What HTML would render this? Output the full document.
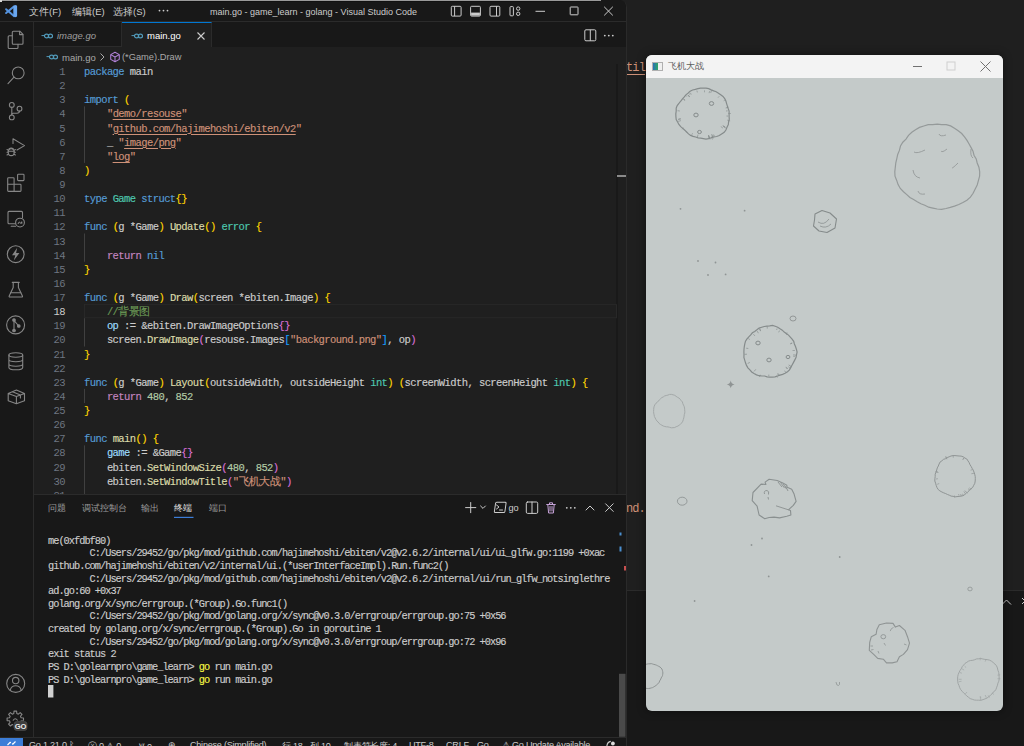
<!DOCTYPE html>
<html><head><meta charset="utf-8">
<style>
*{margin:0;padding:0;box-sizing:border-box}
html,body{width:1024px;height:746px;overflow:hidden;background:#1f1f1f;font-family:"Liberation Sans",sans-serif;position:relative}
.a{position:absolute}
#vs{left:0;top:0;width:627px;height:746px;background:#181818;border-radius:5px 7px 0 0;overflow:hidden;border-right:1px solid #2a2a2a}
#title{left:0;top:0;width:627px;height:22px;border-bottom:1px solid #2b2b2b;background:#181818}
.menu{top:6px;font-size:9.5px;color:#cccccc;white-space:nowrap}
#act{left:0;top:22px;width:34px;height:715px;background:#181818;border-right:1px solid #2b2b2b}
#tabs{left:34px;top:22px;width:593px;height:25px;background:#181818}
.tab{top:0;height:25px;white-space:nowrap}
#crumb{left:34px;top:47px;width:593px;height:17px;background:#1f1f1f}
#editor{left:34px;top:64px;width:593px;height:430px;background:#1f1f1f;overflow:hidden}
.ln{position:absolute;left:0;width:31px;margin-top:1px;height:14px;line-height:14px;text-align:right;font-family:"Liberation Mono",monospace;font-size:10.5px;color:#6e7681;letter-spacing:-0.58px}
.cl{position:absolute;left:50px;margin-top:1px;-webkit-text-stroke:0.15px currentColor;font-family:"Liberation Mono",monospace;font-size:10.5px;letter-spacing:-0.58px;color:#cccccc;white-space:pre;height:14px;line-height:14px}
.k{color:#569cd6}.s{color:#ce9178}.t{color:#4ec9b0}.f{color:#dcdcaa}.v{color:#9cdcfe}.n{color:#b5cea8}.c{color:#6a9955}.p{color:#c586c0}
.b1{color:#ffd700}.b2{color:#da70d6}.b3{color:#179fff}
.u{text-decoration:underline;text-underline-offset:2px}
#panel{left:34px;top:494px;width:593px;height:243px;background:#181818;border-top:1px solid #2b2b2b}
.pt{top:8px;font-size:8.5px;color:#9d9d9d;white-space:nowrap}
.tl{position:absolute;left:48px;margin-top:1.5px;-webkit-text-stroke:0.15px currentColor;font-family:"Liberation Mono",monospace;font-size:10.3px;letter-spacing:-0.98px;color:#cccccc;white-space:pre;height:12.58px;line-height:12.58px}
#status{left:0;top:737px;width:627px;height:9px;background:#181818;border-top:1px solid #2b2b2b;overflow:hidden}
.st{top:1.5px;font-size:9.1px;letter-spacing:-0.25px;color:#cccccc;white-space:nowrap}
#game{left:646px;top:55px;width:357px;height:656px;background:#c4cac9;border-radius:6px;overflow:hidden;box-shadow:0 0 10px rgba(0,0,0,.45)}
#gtitle{left:0;top:0;width:357px;height:23px;background:#f3f3f3}
</style></head><body>
<!-- background window -->
<div class="a" style="left:500px;top:60.8px;font-family:'Liberation Mono',monospace;font-size:12px;letter-spacing:-0.9px;color:#ce9178;white-space:pre;text-decoration:underline;text-underline-offset:3px">hi/ebiten/v2/ebitenutil</div>
<div class="a" style="left:607px;top:501.9px;font-family:'Liberation Mono',monospace;font-size:12px;letter-spacing:-0.9px;color:#ce9178;white-space:pre">round.</div>
<div class="a" style="left:627px;top:590px;width:397px;height:156px;background:#181818;border-top:1px solid #2b2b2b"></div>
<svg class="a" style="left:995px;top:592px" width="29" height="20"><path d="M7 12.5 L11.5 8 L16 12.5" fill="none" stroke="#cccccc" stroke-width="1"/><path d="M27 6 L33 12 M33 6 L27 12" stroke="#cccccc" stroke-width="1"/></svg>

<div class="a" id="vs">
  <div class="a" id="title">
    <svg class="a" style="left:0;top:0" width="22" height="21" viewBox="0 0 22 21"><g stroke="#5593df" stroke-width="2" stroke-linecap="round"><path d="M14.2 6.2 L6.1 13"/><path d="M14.2 16.2 L6.1 9.2"/></g><path d="M13.3 6.3 L15.6 5 Q17.1 5.2 17.1 6.3 V15.8 Q17.1 17 15.6 17.2 L13.3 16.1 Z" fill="#6aa7f0"/></svg>
    <div class="a menu" style="left:29px">文件(F)</div>
    <div class="a menu" style="left:72px">编辑(E)</div>
    <div class="a menu" style="left:113px">选择(S)</div>
    <div class="a menu" style="left:210px;font-size:9px;top:7px">main.go - game_learn - golang - Visual Studio Code</div>
  </div>
  <div class="a" id="act"></div>
  <svg class="a" style="left:0;top:21px" width="33" height="716" viewBox="0 21 33 716">
<g fill="none" stroke="#868686" stroke-width="1.1" stroke-linejoin="round" stroke-linecap="round">
<!-- explorer -->
<path d="M12.3 35.8 H9.2 Q8.2 35.8 8.2 36.8 V47.5 Q8.2 48.5 9.2 48.5 H17 Q18 48.5 18 47.5 V44.3"/>
<path d="M13.3 31.2 H19.8 L23 34.4 V43.2 Q23 44.2 22 44.2 H13.3 Q12.3 44.2 12.3 43.2 V32.2 Q12.3 31.2 13.3 31.2 Z"/>
<path d="M19.6 31.4 V34.6 H22.8"/>
<!-- search -->
<circle cx="18.2" cy="72.9" r="5.9"/>
<path d="M14 77.2 L8 83.6"/>
<!-- scm -->
<circle cx="11.8" cy="104.9" r="2.4"/>
<circle cx="11.8" cy="117.4" r="2.4"/>
<circle cx="19.5" cy="108.7" r="2.4"/>
<path d="M11.8 107.3 V115"/>
<path d="M19.5 111.1 Q19.5 113.2 17 113.2 H13 Q11.8 113.2 11.8 114.2"/>
<!-- debug -->
<path d="M13 143.5 V138.7 L24.5 145.6 L17 150"/>
<ellipse cx="11.2" cy="152.2" rx="3" ry="3.4"/>
<path d="M7 149.5 L8.3 150.3 M7 152.3 H8.2 M7 155 L8.3 154.2 M15.4 149.5 L14.1 150.3 M15.4 152.3 H14.2 M15.4 155 L14.1 154.2 M9 149 Q11.2 147.3 13.4 149 M8.3 151.3 H14.1"/>
<!-- extensions -->
<rect x="7.7" y="177.7" width="6.4" height="6.5" rx="0.8"/>
<path d="M7.7 184.2 V190.6 Q7.7 191.4 8.5 191.4 H20.2 Q21 191.4 21 190.6 V184.9 Q21 184.2 20.2 184.2 H14.1 V191.4"/>
<rect x="17.6" y="174.2" width="6.4" height="6.4" rx="0.8"/>
<!-- remote explorer -->
<path d="M15.5 223.8 H9 Q8 223.8 8 222.8 V212.4 Q8 211.4 9 211.4 H21.5 Q22.5 211.4 22.5 212.4 V217.6"/>
<path d="M11.2 226.2 H15.6"/>
<circle cx="20" cy="222.6" r="4.4"/>
<path d="M18.2 223.4 L19.4 222.2 M20.6 223.2 L21.8 222 M21.8 222 V223.2"/>
<!-- lightning -->
<circle cx="15.7" cy="254.2" r="8.4"/>
<!-- flask -->
<path d="M12.3 282.4 H19.2 M13.2 282.4 V287.5 L9.2 296 Q8.8 297 9.8 297 H21.8 Q22.8 297 22.4 296 L18.4 287.5 V282.4"/>
<path d="M10.8 292.8 H20.8"/>
<!-- git graph -->
<circle cx="15.6" cy="324.9" r="9"/>
<path d="M14 319.5 V330.5 M14.3 320.8 L18.8 326"/>
<circle cx="14" cy="320" r="1.3" fill="#868686"/><circle cx="18.8" cy="326" r="1.3" fill="#868686"/><circle cx="14" cy="330.5" r="1.3" fill="#868686"/>
<!-- database -->
<ellipse cx="15.8" cy="355" rx="6.9" ry="2.2"/>
<path d="M8.9 355 V367.5 Q8.9 369.8 15.8 369.8 Q22.7 369.8 22.7 367.5 V355 M8.9 359.6 Q8.9 361.8 15.8 361.8 Q22.7 361.8 22.7 359.6 M8.9 364 Q8.9 366.2 15.8 366.2 Q22.7 366.2 22.7 364"/>
<!-- package -->
<path d="M8.2 393.5 L16.4 396.5 L24.5 393.5 M16.4 396.5 V403.7 M8.2 393.5 V400.7 L16.4 403.7 L24.5 400.7 V393.5 L16.4 390 L8.2 393.5 M12.5 391.8 L20.4 395 V398"/>
<!-- account -->
<circle cx="15.7" cy="683.4" r="9"/>
<circle cx="15.7" cy="680.6" r="3.2"/>
<path d="M10.2 690.2 Q11.2 685.7 15.7 685.7 Q20.2 685.7 21.2 690.2"/>
<!-- gear -->
<path d="M14.00 711.10 L16.60 711.10 L16.79 713.49 L18.35 714.14 L20.18 712.59 L22.01 714.42 L20.46 716.25 L21.11 717.81 L23.50 718.00 L23.50 720.60 L21.11 720.79 L20.46 722.35 L22.01 724.18 L20.18 726.01 L18.35 724.46 L16.79 725.11 L16.60 727.50 L14.00 727.50 L13.81 725.11 L12.25 724.46 L10.42 726.01 L8.59 724.18 L10.14 722.35 L9.49 720.79 L7.10 720.60 L7.10 718.00 L9.49 717.81 L10.14 716.25 L8.59 714.42 L10.42 712.59 L12.25 714.14 L13.81 713.49 Z"/>
<path d="M13.2 720.2 Q15.3 717.2 17.4 720.2"/>
</g>
<path d="M17.2 247.8 L12 255.3 H15.3 L13.8 260.6 L19.4 253 H16.1 Z" fill="#868686"/>
<rect x="13.2" y="720.8" width="14.6" height="10.2" rx="3" fill="#181818"/><rect x="14.2" y="721.6" width="12.8" height="8.8" rx="2.5" fill="#3d3d3d" stroke="#555" stroke-width="0.6"/>
<text x="20.6" y="729" text-anchor="middle" font-family="Liberation Sans" font-size="7.6" font-weight="bold" fill="#e8e8e8">GO</text>
</svg>
  <div class="a" id="tabs">
    <div class="a tab" style="left:0;width:88px;border-right:1px solid #2b2b2b;border-bottom:1px solid #2b2b2b;background:#181818">
      <svg class="a" style="left:7.0px;top:10.0px" width="16" height="8" viewBox="0 0 16 8"><path d="M0.5 3.6 H3.2" stroke="#519aba" stroke-width="1"/><ellipse cx="5.6" cy="4" rx="2.1" ry="1.9" fill="none" stroke="#519aba" stroke-width="1.2"/><ellipse cx="9.4" cy="4" rx="2.1" ry="1.9" fill="none" stroke="#519aba" stroke-width="1.2"/></svg>
      <span class="a" style="left:23px;top:8px;color:#9d9d9d;font-style:italic;font-size:9.5px">image.go</span>
    </div>
    <div class="a tab" style="left:88px;width:90px;height:25px;background:#1f1f1f;border-top:1px solid #0078d4;border-right:1px solid #2b2b2b">
      <svg class="a" style="left:9.0px;top:9.0px" width="16" height="8" viewBox="0 0 16 8"><path d="M0.5 3.6 H3.2" stroke="#519aba" stroke-width="1"/><ellipse cx="5.6" cy="4" rx="2.1" ry="1.9" fill="none" stroke="#519aba" stroke-width="1.2"/><ellipse cx="9.4" cy="4" rx="2.1" ry="1.9" fill="none" stroke="#519aba" stroke-width="1.2"/></svg>
      <span class="a" style="left:25px;top:7px;color:#ffffff;font-size:9.5px">main.go</span>
      <svg class="a" style="left:74px;top:8px" width="10" height="10"><path d="M1.5 1.5 L8.5 8.5 M8.5 1.5 L1.5 8.5" stroke="#cccccc" stroke-width="1.1"/></svg>
    </div>
  </div>
  <div class="a" id="crumb">
    <svg class="a" style="left:12.0px;top:6.0px" width="16" height="8" viewBox="0 0 16 8"><path d="M0.5 3.6 H3.2" stroke="#519aba" stroke-width="1"/><ellipse cx="5.6" cy="4" rx="2.1" ry="1.9" fill="none" stroke="#519aba" stroke-width="1.2"/><ellipse cx="9.4" cy="4" rx="2.1" ry="1.9" fill="none" stroke="#519aba" stroke-width="1.2"/></svg>
    <span class="a" style="left:28px;top:4.5px;color:#a9a9a9;font-size:9.5px">main.go</span>
    <svg class="a" style="left:64px;top:5px" width="8" height="10"><path d="M2.5 1.5 L6 5 L2.5 8.5" fill="none" stroke="#a9a9a9" stroke-width="1"/></svg>
    <svg class="a" style="left:74.5px;top:3.5px" width="12" height="12" viewBox="0 0 14 14"><path d="M7 1.5 L12 4.2 V9.8 L7 12.5 L2 9.8 V4.2 Z M2 4.2 L7 7 L12 4.2 M7 7 V12.5" fill="none" stroke="#b180d7" stroke-width="1.2" stroke-linejoin="round"/></svg>
    <span class="a" style="left:88px;top:4.5px;color:#a9a9a9;font-size:9.3px">(*Game).Draw</span>
  </div>
  <div class="a" id="editor">
<div class="ln" style="top:0.00px">1</div>
<div class="cl" style="top:0.00px"><span class="k">package</span> main</div>
<div class="ln" style="top:14.12px">2</div>
<div class="ln" style="top:28.25px">3</div>
<div class="cl" style="top:28.25px"><span class="k">import</span> <span class="b1">(</span></div>
<div class="ln" style="top:42.38px">4</div>
<div class="cl" style="top:42.38px">    <span class="s">"<span class="u">demo/resouse</span>"</span></div>
<div class="ln" style="top:56.50px">5</div>
<div class="cl" style="top:56.50px">    <span class="s">"<span class="u">github.com/hajimehoshi/ebiten/v2</span>"</span></div>
<div class="ln" style="top:70.62px">6</div>
<div class="cl" style="top:70.62px">    _ <span class="s">"<span class="u">image/png</span>"</span></div>
<div class="ln" style="top:84.75px">7</div>
<div class="cl" style="top:84.75px">    <span class="s">"<span class="u">log</span>"</span></div>
<div class="ln" style="top:98.88px">8</div>
<div class="cl" style="top:98.88px"><span class="b1">)</span></div>
<div class="ln" style="top:113.00px">9</div>
<div class="ln" style="top:127.12px">10</div>
<div class="cl" style="top:127.12px"><span class="k">type</span> <span class="t">Game</span> <span class="k">struct</span><span class="b1">{}</span></div>
<div class="ln" style="top:141.25px">11</div>
<div class="ln" style="top:155.38px">12</div>
<div class="cl" style="top:155.38px"><span class="k">func</span> <span class="b1">(</span>g *Game<span class="b1">)</span> <span class="f">Update</span><span class="b1">()</span> <span class="t">error</span> <span class="b1">{</span></div>
<div class="ln" style="top:169.50px">13</div>
<div class="ln" style="top:183.62px">14</div>
<div class="cl" style="top:183.62px">    <span class="p">return</span> <span class="k">nil</span></div>
<div class="ln" style="top:197.75px">15</div>
<div class="cl" style="top:197.75px"><span class="b1">}</span></div>
<div class="ln" style="top:211.88px">16</div>
<div class="ln" style="top:226.00px">17</div>
<div class="cl" style="top:226.00px"><span class="k">func</span> <span class="b1">(</span>g *Game<span class="b1">)</span> <span class="f">Draw</span><span class="b1">(</span>screen *ebiten.Image<span class="b1">)</span> <span class="b1">{</span></div>
<div class="ln" style="top:240.12px;color:#cccccc">18</div>
<div class="cl" style="top:240.12px">    <span class="c">//背景图</span></div>
<div class="ln" style="top:254.25px">19</div>
<div class="cl" style="top:254.25px">    <span class="v">op</span> := &amp;ebiten.DrawImageOptions<span class="b2">{}</span></div>
<div class="ln" style="top:268.38px">20</div>
<div class="cl" style="top:268.38px">    screen.<span class="f">DrawImage</span><span class="b2">(</span>resouse.Images<span class="b3">[</span><span class="s">"background.png"</span><span class="b3">]</span>, op<span class="b2">)</span></div>
<div class="ln" style="top:282.50px">21</div>
<div class="cl" style="top:282.50px"><span class="b1">}</span></div>
<div class="ln" style="top:296.62px">22</div>
<div class="ln" style="top:310.75px">23</div>
<div class="cl" style="top:310.75px"><span class="k">func</span> <span class="b1">(</span>g *Game<span class="b1">)</span> <span class="f">Layout</span><span class="b1">(</span>outsideWidth, outsideHeight <span class="t">int</span><span class="b1">)</span> <span class="b1">(</span>screenWidth, screenHeight <span class="t">int</span><span class="b1">)</span> <span class="b1">{</span></div>
<div class="ln" style="top:324.88px">24</div>
<div class="cl" style="top:324.88px">    <span class="p">return</span> <span class="n">480</span>, <span class="n">852</span></div>
<div class="ln" style="top:339.00px">25</div>
<div class="cl" style="top:339.00px"><span class="b1">}</span></div>
<div class="ln" style="top:353.12px">26</div>
<div class="ln" style="top:367.25px">27</div>
<div class="cl" style="top:367.25px"><span class="k">func</span> <span class="f">main</span><span class="b1">()</span> <span class="b1">{</span></div>
<div class="ln" style="top:381.38px">28</div>
<div class="cl" style="top:381.38px">    <span class="v">game</span> := &amp;Game<span class="b2">{}</span></div>
<div class="ln" style="top:395.50px">29</div>
<div class="cl" style="top:395.50px">    ebiten.<span class="f">SetWindowSize</span><span class="b2">(</span><span class="n">480</span>, <span class="n">852</span><span class="b2">)</span></div>
<div class="ln" style="top:409.62px">30</div>
<div class="cl" style="top:409.62px">    ebiten.<span class="f">SetWindowTitle</span><span class="b2">(</span><span class="s">"飞机大战"</span><span class="b2">)</span></div>
<div class="ln" style="top:423.75px">31</div>
  </div>
  <div class="a" id="panel">
    <div class="a pt" style="left:14px">问题</div>
    <div class="a pt" style="left:48px">调试控制台</div>
    <div class="a pt" style="left:107px">输出</div>
    <div class="a pt" style="left:140px;color:#e7e7e7">终端</div>
    <div class="a pt" style="left:175px">端口</div>
  </div>
<div class="tl" style="top:533.10px">me(0xfdbf80)</div>
<div class="tl" style="top:545.74px">        C:/Users/29452/go/pkg/mod/github.com/hajimehoshi/ebiten/v2@v2.6.2/internal/ui/ui_glfw.go:1199 +0xac</div>
<div class="tl" style="top:558.38px">github.com/hajimehoshi/ebiten/v2/internal/ui.(*userInterfaceImpl).Run.func2()</div>
<div class="tl" style="top:571.02px">        C:/Users/29452/go/pkg/mod/github.com/hajimehoshi/ebiten/v2@v2.6.2/internal/ui/run_glfw_notsinglethre</div>
<div class="tl" style="top:583.66px">ad.go:60 +0x37</div>
<div class="tl" style="top:596.30px">golang.org/x/sync/errgroup.(*Group).Go.func1()</div>
<div class="tl" style="top:608.94px">        C:/Users/29452/go/pkg/mod/golang.org/x/sync@v0.3.0/errgroup/errgroup.go:75 +0x56</div>
<div class="tl" style="top:621.58px">created by golang.org/x/sync/errgroup.(*Group).Go in goroutine 1</div>
<div class="tl" style="top:634.22px">        C:/Users/29452/go/pkg/mod/golang.org/x/sync@v0.3.0/errgroup/errgroup.go:72 +0x96</div>
<div class="tl" style="top:646.86px">exit status 2</div>
<div class="tl" style="top:659.50px">PS D:\golearnpro\game_learn&gt; <span style="color:#f5f543">go</span> run main.go</div>
<div class="tl" style="top:672.14px">PS D:\golearnpro\game_learn&gt; <span style="color:#f5f543">go</span> run main.go</div>
  <div class="a" id="status">
    <div class="a" style="left:0;top:0;width:23px;height:10px;background:#3c7dd7"></div>
    <svg class="a" style="left:0;top:0" width="23" height="10"><path d="M7.5 7 L10.5 4 M10.5 4 V5.2 M15.5 3.5 L12.5 6.5 M12.5 6.5 V5.3" stroke="#fff" stroke-width="1.1" fill="none"/></svg>
    <div class="a st" style="left:29px">Go 1.21.0 <span>ᛒ</span></div>
    <div class="a st" style="left:88px">ⓧ 0 <span>⚠</span> 0</div>
    <div class="a st" style="left:139px">Ꝟ 0</div>
    <div class="a st" style="left:168px">⊕</div>
    <div class="a st" style="left:190px">Chinese (Simplified)</div>
    <div class="a st" style="left:282px">行 18</div>
    <div class="a st" style="left:310px">列 10</div>
    <div class="a st" style="left:344px">制表符长度: 4</div>
    <div class="a st" style="left:409px">UTF-8</div>
    <div class="a st" style="left:446px">CRLF</div>
    <div class="a st" style="left:477px">Go</div>
    <div class="a st" style="left:502px">⚠ Go Update Available</div>
    <svg class="a" style="left:600px;top:0" width="26" height="9" viewBox="600 737 26 9"><path d="M606.8 746 Q607 741 610.8 740.4" fill="none" stroke="#cccccc" stroke-width="1.1"/><circle cx="612.9" cy="742.5" r="1.9" fill="#dddddd"/></svg>
  </div>
  <svg class="a" style="left:0;top:0" width="627" height="746" viewBox="0 0 627 746">
<g fill="none" stroke="#cccccc" stroke-width="1" stroke-linejoin="round">
<!-- title bar layout icons -->
<rect x="451.3" y="6.3" width="9.8" height="9.8" rx="1"/><path d="M454.6 6.3 V16.1"/>
<rect x="470.6" y="6.3" width="9.8" height="9.8" rx="1"/><rect x="471.1" y="12.6" width="8.8" height="3" fill="#cccccc" stroke="none"/>
<rect x="490" y="6.3" width="9.8" height="9.8" rx="1"/><path d="M496.5 6.3 V16.1"/>
<rect x="510" y="6.6" width="3.4" height="9.2" rx="0.8"/><circle cx="518.2" cy="8.6" r="1.7"/><circle cx="518.2" cy="13.8" r="1.7"/>
<path d="M535.5 11.3 H545"/>
<rect x="570.2" y="7" width="7.8" height="7.8" rx="0.5"/>
<path d="M604.2 6.8 L612.8 15.4 M612.8 6.8 L604.2 15.4"/>
<!-- editor actions -->
<rect x="584.8" y="29.8" width="11" height="11" rx="1.2"/><path d="M590.3 29.8 V40.8"/>
</g>
<g fill="#cccccc">
<circle cx="604.8" cy="35.6" r="0.9"/><circle cx="608.8" cy="35.6" r="0.9"/><circle cx="612.8" cy="35.6" r="0.9"/>
<circle cx="159.5" cy="10.6" r="0.9"/><circle cx="163.5" cy="10.6" r="0.9"/><circle cx="167.5" cy="10.6" r="0.9"/>
</g>
<!-- panel header icons -->
<g fill="none" stroke="#cccccc" stroke-width="1" stroke-linejoin="round" stroke-linecap="round">
<path d="M470.7 502.5 V512.7 M465.6 507.6 H475.8"/>
<path d="M480.6 506 L483 508.4 L485.4 506"/>
<rect x="495" y="502.3" width="10.5" height="10.3" rx="1" transform="skewX(-8) translate(71.3 0)"/>
<path d="M496.5 505 L499 507 L496.5 509 M499.5 510 H502.5"/>
<rect x="526.3" y="502" width="11.4" height="11.4" rx="1.3"/><path d="M532 502 V513.4"/>
<path d="M546.7 504.5 H555.3 M549.5 504.5 V502.8 H552.5 V504.5 M547.8 504.5 L548.6 513 H553.4 L554.2 504.5 M550 506.5 V511 M552 506.5 V511" stroke="#c7a3d9"/>
<path d="M586 510 L590 506 L594 510"/>
<path d="M605.6 503.8 L613.2 511.4 M613.2 503.8 L605.6 511.4"/>
</g>
<g fill="#cccccc"><circle cx="566.8" cy="507.8" r="0.9"/><circle cx="570.8" cy="507.8" r="0.9"/><circle cx="574.8" cy="507.8" r="0.9"/></g>
<text x="508.5" y="511" font-family="Liberation Sans" font-size="9.2" fill="#cccccc">go</text>
<!-- panel tab underline -->
<rect x="174" y="516.8" width="19.5" height="1.2" fill="#3c7dd7"/>
<!-- editor scrollbar -->
<rect x="616.5" y="64" width="1" height="430" fill="#141414"/>
<rect x="617" y="175" width="9" height="2" fill="#8a8a8a"/>
<!-- terminal overview marks -->
<rect x="619.5" y="532.5" width="2" height="3" fill="#4b8fd0"/>
<rect x="619.5" y="546.5" width="2" height="5" fill="#4b8fd0"/>
<rect x="624" y="566" width="3" height="4.5" fill="#c85050"/>
<!-- terminal scrollbar -->
<rect x="619" y="673.8" width="6.5" height="63" fill="#4a4a4a"/>
<!-- cursor -->
<rect x="48" y="685" width="5.4" height="12.5" fill="#d0d0d0"/>
<!-- indent guides -->
<g fill="#404040">
<rect x="84" y="106.38" width="1" height="56.50"/>
<rect x="84" y="233.50" width="1" height="28.25"/>
<rect x="84" y="304.12" width="1" height="42.38"/>
<rect x="84" y="388.88" width="1" height="14.12"/>
<rect x="84" y="445.38" width="1" height="48.62"/>
</g>
<!-- current line border -->
<rect x="84.5" y="304.62" width="532" height="13.12" fill="none" stroke="#282828" stroke-width="1"/>
</svg>
</div>

<div class="a" id="game">
  <svg class="a" style="left:0;top:23px" width="357" height="633" viewBox="646 78 357 633"><path d="M729.1 113.8 L729.1 116.5 L729.3 119.2 L728.6 121.9 L728.3 124.7 L727.0 127.3 L725.9 130.0 L724.2 132.3 L721.6 133.9 L719.3 135.5 L716.6 136.5 L713.8 137.0 L711.2 137.8 L708.7 138.7 L706.0 139.1 L703.3 138.6 L700.7 138.1 L698.1 137.8 L695.6 137.0 L693.1 136.4 L690.6 135.4 L688.5 133.9 L686.6 132.0 L684.8 130.2 L682.8 128.4 L680.7 126.6 L678.9 124.5 L677.6 122.0 L676.2 119.5 L675.9 116.6 L675.8 113.8 L676.2 111.0 L676.2 108.1 L677.2 105.5 L679.1 103.2 L680.8 101.0 L682.5 98.9 L684.3 96.9 L685.9 94.8 L688.0 93.1 L690.1 91.2 L692.6 90.0 L695.3 89.4 L697.9 88.7 L700.6 88.2 L703.3 88.0 L706.0 88.2 L708.7 88.7 L711.2 89.9 L713.7 90.9 L716.2 91.8 L718.5 93.2 L720.7 94.8 L723.0 96.4 L724.7 98.5 L725.9 101.0 L726.6 103.6 L727.4 106.1 L728.2 108.6 L729.1 111.1 Z" fill="none" stroke="#858b8b" stroke-width="1.20" opacity="1.00"/><path d="M680.9 120.6 L678.2 121.4" stroke="#858b8b" stroke-width="0.8" opacity="0.80"/><path d="M680.6 118.7 L678.3 119.2" stroke="#858b8b" stroke-width="0.8" opacity="0.80"/><path d="M712.6 134.8 L713.5 137.0" stroke="#858b8b" stroke-width="0.8" opacity="0.80"/><path d="M709.1 93.1 L709.6 91.2" stroke="#858b8b" stroke-width="0.8" opacity="0.80"/><path d="M723.7 126.7 L725.9 128.0" stroke="#858b8b" stroke-width="0.8" opacity="0.80"/><path d="M727.3 120.2 L730.1 120.9" stroke="#858b8b" stroke-width="0.8" opacity="0.80"/><path d="M689.9 94.7 L688.9 93.3" stroke="#858b8b" stroke-width="0.8" opacity="0.80"/><path d="M726.5 116.0 L728.1 116.1" stroke="#858b8b" stroke-width="0.8" opacity="0.80"/><path d="M711.5 134.2 L712.1 135.7" stroke="#858b8b" stroke-width="0.8" opacity="0.80"/><path d="M680.9 118.9 L678.2 119.5" stroke="#858b8b" stroke-width="0.8" opacity="0.80"/><path d="M679.8 111.0 L677.6 110.7" stroke="#858b8b" stroke-width="0.8" opacity="0.80"/><path d="M691.3 94.5 L690.3 92.8" stroke="#858b8b" stroke-width="0.8" opacity="0.80"/><path d="M728.2 113.4 L730.9 113.4" stroke="#858b8b" stroke-width="0.8" opacity="0.80"/><path d="M697.4 92.4 L696.9 90.6" stroke="#858b8b" stroke-width="0.8" opacity="0.80"/><path d="M698.0 134.6 L697.4 137.1" stroke="#858b8b" stroke-width="0.8" opacity="0.80"/><path d="M683.6 127.9 L681.9 129.1" stroke="#858b8b" stroke-width="0.8" opacity="0.80"/><path d="M726.8 107.5 L728.3 107.2" stroke="#858b8b" stroke-width="0.8" opacity="0.80"/><path d="M709.5 137.2 L710.0 139.4" stroke="#858b8b" stroke-width="0.8" opacity="0.80"/><path d="M726.0 111.0 L727.6 110.8" stroke="#858b8b" stroke-width="0.8" opacity="0.80"/><path d="M686.7 96.5 L685.4 95.1" stroke="#858b8b" stroke-width="0.8" opacity="0.80"/><path d="M722.6 125.4 L725.1 126.9" stroke="#858b8b" stroke-width="0.8" opacity="0.80"/><path d="M704.4 92.3 L704.5 90.4" stroke="#858b8b" stroke-width="0.8" opacity="0.80"/><path d="M720.8 126.5 L722.9 128.1" stroke="#858b8b" stroke-width="0.8" opacity="0.80"/><path d="M713.6 134.5 L714.5 136.4" stroke="#858b8b" stroke-width="0.8" opacity="0.80"/><path d="M712.0 135.8 L712.6 137.4" stroke="#858b8b" stroke-width="0.8" opacity="0.80"/><path d="M689.7 96.9 L688.4 95.2" stroke="#858b8b" stroke-width="0.8" opacity="0.80"/><path d="M708.5 135.3 L709.2 138.1" stroke="#858b8b" stroke-width="0.8" opacity="0.80"/><path d="M710.7 92.9 L711.6 90.2" stroke="#858b8b" stroke-width="0.8" opacity="0.80"/><path d="M708.9 135.6 L709.6 138.3" stroke="#858b8b" stroke-width="0.8" opacity="0.80"/><path d="M689.6 97.1 L687.7 94.8" stroke="#858b8b" stroke-width="0.8" opacity="0.80"/><path d="M708.4 135.2 L709.0 137.8" stroke="#858b8b" stroke-width="0.8" opacity="0.80"/><path d="M692.6 133.3 L691.8 134.7" stroke="#858b8b" stroke-width="0.8" opacity="0.80"/><path d="M723.1 126.2 L724.7 127.2" stroke="#858b8b" stroke-width="0.8" opacity="0.80"/><path d="M685.0 100.5 L683.3 99.2" stroke="#858b8b" stroke-width="0.8" opacity="0.80"/><path d="M725.7 108.0 L728.0 107.4" stroke="#858b8b" stroke-width="0.8" opacity="0.80"/><path d="M718.1 97.6 L719.2 96.3" stroke="#858b8b" stroke-width="0.8" opacity="0.80"/><path d="M723.7 100.8 L725.2 99.8" stroke="#858b8b" stroke-width="0.8" opacity="0.80"/><path d="M712.2 135.8 L713.2 138.5" stroke="#858b8b" stroke-width="0.8" opacity="0.80"/><path d="M711.4 136.8 L712.4 139.5" stroke="#858b8b" stroke-width="0.8" opacity="0.80"/><path d="M685.1 100.1 L683.7 99.1" stroke="#858b8b" stroke-width="0.8" opacity="0.80"/><ellipse cx="711.5" cy="103.5" rx="2.2" ry="1.9" fill="none" stroke="#858b8b" stroke-width="1.00" opacity="1.00"/><ellipse cx="696.0" cy="115.0" rx="2.2" ry="1.9" fill="none" stroke="#858b8b" stroke-width="1.00" opacity="1.00"/><ellipse cx="699.5" cy="132.0" rx="1.9" ry="1.6" fill="none" stroke="#858b8b" stroke-width="1.00" opacity="1.00"/><path d="M978.9 167.2 L979.7 171.7 L979.6 176.2 L978.4 180.6 L977.2 185.0 L975.2 189.1 L973.1 193.3 L970.4 197.1 L966.9 200.2 L962.9 202.5 L958.8 204.5 L954.5 206.1 L950.3 207.4 L946.0 208.5 L941.6 209.4 L937.2 209.0 L932.9 208.1 L928.7 207.2 L924.8 205.3 L920.9 203.8 L917.2 201.8 L913.6 199.6 L909.9 197.5 L906.8 194.6 L903.5 191.7 L900.3 188.5 L898.1 184.6 L896.7 180.4 L895.0 176.2 L894.8 171.7 L895.3 167.2 L895.8 162.8 L896.8 158.6 L897.7 154.4 L899.4 150.4 L900.5 146.0 L902.8 142.2 L906.0 139.1 L908.5 135.3 L911.8 132.2 L915.5 129.7 L919.5 127.4 L923.8 126.0 L928.2 124.7 L932.7 124.6 L937.2 124.1 L941.7 124.7 L946.2 124.7 L950.6 125.9 L954.5 128.3 L958.2 130.8 L961.7 133.5 L964.5 136.9 L967.0 140.4 L969.1 144.0 L971.1 147.6 L973.0 151.2 L974.0 155.2 L976.2 158.9 L977.2 163.0 Z" fill="none" stroke="#959a9a" stroke-width="1.20" opacity="1.00"/><path d="M914 152 Q917 154 925 150" fill="none" stroke="#959a9a" stroke-width="0.9"/><path d="M913 170 Q914 177 920 178" fill="none" stroke="#959a9a" stroke-width="0.9"/><path d="M918 191 Q919 195 925 194" fill="none" stroke="#959a9a" stroke-width="0.9"/><path d="M941 151 Q942 153 947 149" fill="none" stroke="#959a9a" stroke-width="0.9"/><path d="M952 168 Q953 168 958 163" fill="none" stroke="#959a9a" stroke-width="0.9"/><path d="M939 134 Q940 137 946 135" fill="none" stroke="#959a9a" stroke-width="0.9"/><path d="M971 149 Q970 156 973 158" fill="none" stroke="#959a9a" stroke-width="0.9"/><path d="M815 214 L822 210.5 L830 213 L836.5 219 L835 228 L827 232.5 L819 231 L813.5 226 L814.5 220 Z" fill="none" stroke="#858b8b" stroke-width="1.1" stroke-linejoin="round"/><path d="M818 222 Q824 226 829 219 M820 226 Q826 229 831 224" fill="none" stroke="#8a9090" stroke-width="0.8"/><path d="M797.1 352.0 L796.5 354.8 L796.0 357.6 L794.7 360.1 L793.4 362.6 L792.1 365.0 L790.8 367.4 L789.5 369.9 L787.5 371.7 L785.1 373.2 L782.6 374.4 L780.0 375.1 L777.5 376.0 L775.0 376.8 L772.3 377.1 L769.7 377.1 L767.1 376.9 L764.6 376.0 L761.9 376.0 L759.1 375.7 L756.5 374.9 L754.0 373.6 L751.7 372.0 L749.9 369.8 L747.9 367.8 L746.5 365.4 L745.5 362.8 L744.7 360.1 L743.9 357.5 L744.0 354.7 L743.9 352.0 L744.0 349.3 L744.3 346.6 L744.8 343.9 L745.5 341.2 L747.0 338.9 L748.8 336.8 L750.7 334.9 L752.4 332.8 L754.7 331.4 L756.9 329.8 L759.1 328.1 L761.7 327.3 L764.3 326.5 L767.0 326.1 L769.7 325.8 L772.5 325.4 L775.2 326.3 L777.7 327.2 L780.0 328.8 L782.3 330.2 L784.2 332.1 L786.3 333.6 L788.5 335.1 L790.3 337.1 L792.1 339.1 L793.7 341.3 L794.4 344.0 L795.5 346.5 L796.4 349.2 Z" fill="none" stroke="#858b8b" stroke-width="1.20" opacity="1.00"/><path d="M788.3 366.7 L790.2 368.3" stroke="#858b8b" stroke-width="0.8" opacity="0.80"/><path d="M790.4 343.9 L792.1 343.2" stroke="#858b8b" stroke-width="0.8" opacity="0.80"/><path d="M767.3 328.6 L767.2 326.6" stroke="#858b8b" stroke-width="0.8" opacity="0.80"/><path d="M760.6 331.2 L759.5 328.8" stroke="#858b8b" stroke-width="0.8" opacity="0.80"/><path d="M785.9 366.9 L788.0 368.9" stroke="#858b8b" stroke-width="0.8" opacity="0.80"/><path d="M755.8 369.3 L754.1 371.4" stroke="#858b8b" stroke-width="0.8" opacity="0.80"/><path d="M754.9 335.9 L753.4 334.2" stroke="#858b8b" stroke-width="0.8" opacity="0.80"/><path d="M758.4 333.2 L757.2 331.1" stroke="#858b8b" stroke-width="0.8" opacity="0.80"/><path d="M785.8 367.7 L786.9 368.8" stroke="#858b8b" stroke-width="0.8" opacity="0.80"/><path d="M776.7 375.6 L777.3 377.6" stroke="#858b8b" stroke-width="0.8" opacity="0.80"/><path d="M792.5 350.6 L794.9 350.5" stroke="#858b8b" stroke-width="0.8" opacity="0.80"/><path d="M786.2 335.0 L787.3 333.8" stroke="#858b8b" stroke-width="0.8" opacity="0.80"/><path d="M749.8 339.5 L748.3 338.6" stroke="#858b8b" stroke-width="0.8" opacity="0.80"/><path d="M789.8 365.6 L791.7 366.9" stroke="#858b8b" stroke-width="0.8" opacity="0.80"/><path d="M777.6 373.4 L778.2 375.2" stroke="#858b8b" stroke-width="0.8" opacity="0.80"/><path d="M776.6 330.0 L777.1 328.5" stroke="#858b8b" stroke-width="0.8" opacity="0.80"/><path d="M778.7 332.3 L779.5 330.6" stroke="#858b8b" stroke-width="0.8" opacity="0.80"/><path d="M793.2 356.2 L794.8 356.5" stroke="#858b8b" stroke-width="0.8" opacity="0.80"/><path d="M748.3 348.5 L746.2 348.2" stroke="#858b8b" stroke-width="0.8" opacity="0.80"/><path d="M760.6 330.8 L759.7 328.7" stroke="#858b8b" stroke-width="0.8" opacity="0.80"/><path d="M747.0 354.2 L744.6 354.4" stroke="#858b8b" stroke-width="0.8" opacity="0.80"/><path d="M788.7 364.9 L790.2 365.9" stroke="#858b8b" stroke-width="0.8" opacity="0.80"/><path d="M786.0 333.7 L787.0 332.5" stroke="#858b8b" stroke-width="0.8" opacity="0.80"/><path d="M784.4 370.6 L785.9 372.4" stroke="#858b8b" stroke-width="0.8" opacity="0.80"/><path d="M793.2 354.8 L796.1 355.2" stroke="#858b8b" stroke-width="0.8" opacity="0.80"/><path d="M749.8 362.4 L747.7 363.5" stroke="#858b8b" stroke-width="0.8" opacity="0.80"/><path d="M790.3 343.7 L792.1 343.0" stroke="#858b8b" stroke-width="0.8" opacity="0.80"/><path d="M778.5 373.7 L779.3 375.8" stroke="#858b8b" stroke-width="0.8" opacity="0.80"/><path d="M768.8 374.6 L768.8 376.2" stroke="#858b8b" stroke-width="0.8" opacity="0.80"/><path d="M760.3 374.8 L759.4 377.0" stroke="#858b8b" stroke-width="0.8" opacity="0.80"/><ellipse cx="758.0" cy="343.0" rx="2.2" ry="1.9" fill="none" stroke="#858b8b" stroke-width="1.00" opacity="1.00"/><ellipse cx="769.0" cy="360.0" rx="2.2" ry="1.9" fill="none" stroke="#858b8b" stroke-width="1.00" opacity="1.00"/><ellipse cx="788.0" cy="357.0" rx="1.9" ry="1.6" fill="none" stroke="#858b8b" stroke-width="1.00" opacity="1.00"/><ellipse cx="793.0" cy="318.5" rx="3.0" ry="2.5" fill="none" stroke="#8c9191" stroke-width="0.90" opacity="1.00"/><path d="M684.8 411.4 L684.8 413.0 L684.3 414.6 L684.1 416.2 L683.8 417.9 L683.3 419.5 L682.8 421.2 L681.9 422.8 L680.6 424.0 L679.3 425.1 L677.9 426.1 L676.2 426.7 L674.7 427.5 L673.0 427.7 L671.3 427.8 L669.6 427.3 L668.0 426.9 L666.4 426.8 L664.8 426.5 L663.3 426.0 L661.8 425.2 L660.4 424.4 L659.1 423.4 L658.1 422.0 L656.8 420.9 L655.9 419.5 L655.2 418.0 L654.4 416.5 L654.1 414.8 L653.7 413.1 L653.6 411.4 L653.7 409.7 L653.8 408.0 L654.2 406.3 L654.9 404.7 L655.9 403.3 L657.3 402.3 L658.4 401.0 L659.4 399.8 L660.6 398.7 L661.8 397.6 L663.3 396.9 L664.7 395.9 L666.3 395.5 L667.9 395.1 L669.6 394.4 L671.3 394.4 L673.1 394.8 L674.7 395.3 L676.1 396.3 L677.5 397.3 L679.0 398.1 L680.3 399.3 L681.2 400.7 L682.4 401.9 L682.8 403.6 L683.5 405.1 L684.2 406.5 L684.5 408.1 L684.7 409.8 Z" fill="none" stroke="#a3a8a8" stroke-width="1.00" opacity="1.00"/><path d="M769.1 479.3 L777.2 480.5 L782.8 482.9 L786.8 485.3 L787.2 487.3 L791.7 489.3 L794.1 494.1 L796.1 501.4 L793.3 505.4 L788.4 509.8 L790.5 510.6 L790.9 515.0 L786.8 516.3 L779.6 517.9 L774.0 517.1 L769.1 517.5 L764.7 518.7 L759.1 515.0 L757.1 506.2 L752.2 500.6 L753.0 492.5 L761.1 484.1 L765.9 484.5 L765.1 482.1 Z" fill="none" stroke="#8a9090" stroke-width="1.1" stroke-linejoin="round"/><path d="M776 505.8 L788.4 509.8 M778 482 L782 487 M780.5 482.5 L784.5 488 M783 483.5 L786.5 489 M785.5 486 L788 491 M764.5 494 Q763.5 490.5 767 490.5 Q769.5 491 768.5 494.5 M768 497 L768.5 499.5" fill="none" stroke="#8a9090" stroke-width="0.9"/><path d="M975.2 476.4 L975.3 478.7 L975.2 481.0 L974.8 483.3 L973.7 485.3 L972.7 487.4 L970.9 488.8 L969.5 490.3 L967.9 491.7 L966.4 493.2 L964.8 494.5 L963.0 495.7 L961.0 496.1 L959.0 496.4 L957.0 496.6 L955.0 496.9 L953.1 496.3 L951.1 496.1 L949.3 495.2 L947.5 494.5 L945.7 493.6 L943.8 492.9 L941.9 492.0 L939.9 490.9 L938.2 489.5 L937.0 487.6 L936.2 485.4 L935.6 483.2 L934.8 481.0 L934.9 478.7 L935.2 476.4 L935.2 474.2 L936.0 472.1 L936.7 470.0 L937.3 467.9 L938.3 466.0 L939.1 464.0 L940.1 462.0 L941.9 460.8 L943.4 459.4 L945.5 458.7 L947.2 457.6 L949.1 456.8 L951.0 456.0 L953.0 455.6 L955.0 455.6 L957.0 455.8 L959.1 456.0 L961.1 456.1 L963.2 456.8 L964.9 458.0 L966.8 459.0 L968.0 460.9 L969.2 462.7 L970.0 464.7 L971.1 466.4 L972.1 468.3 L973.2 470.1 L974.0 472.1 L974.7 474.2 Z" fill="none" stroke="#8f9494" stroke-width="1.00" opacity="1.00"/><path d="M962.4 493.7 L963.3 495.5" stroke="#8f9494" stroke-width="0.8" opacity="0.80"/><path d="M960.6 494.0 L961.3 496.1" stroke="#8f9494" stroke-width="0.8" opacity="0.80"/><path d="M937.9 478.7 L936.0 479.0" stroke="#8f9494" stroke-width="0.8" opacity="0.80"/><path d="M954.6 495.5 L954.5 497.5" stroke="#8f9494" stroke-width="0.8" opacity="0.80"/><path d="M946.8 459.2 L945.5 456.7" stroke="#8f9494" stroke-width="0.8" opacity="0.80"/><path d="M970.6 470.2 L972.4 469.6" stroke="#8f9494" stroke-width="0.8" opacity="0.80"/><path d="M953.3 457.7 L953.2 455.9" stroke="#8f9494" stroke-width="0.8" opacity="0.80"/><path d="M947.0 458.8 L945.8 456.3" stroke="#8f9494" stroke-width="0.8" opacity="0.80"/><path d="M958.6 494.0 L958.9 495.5" stroke="#8f9494" stroke-width="0.8" opacity="0.80"/><path d="M971.4 473.7 L974.0 473.3" stroke="#8f9494" stroke-width="0.8" opacity="0.80"/><path d="M937.9 472.0 L935.7 471.4" stroke="#8f9494" stroke-width="0.8" opacity="0.80"/><path d="M963.0 459.6 L963.9 457.9" stroke="#8f9494" stroke-width="0.8" opacity="0.80"/><path d="M968.0 488.6 L970.1 490.5" stroke="#8f9494" stroke-width="0.8" opacity="0.80"/><path d="M965.9 491.5 L967.4 493.4" stroke="#8f9494" stroke-width="0.8" opacity="0.80"/><path d="M963.9 491.4 L965.2 493.6" stroke="#8f9494" stroke-width="0.8" opacity="0.80"/><path d="M939.2 483.5 L937.2 484.3" stroke="#8f9494" stroke-width="0.8" opacity="0.80"/><path d="M969.4 487.8 L971.3 489.2" stroke="#8f9494" stroke-width="0.8" opacity="0.80"/><path d="M938.5 472.5 L935.8 471.9" stroke="#8f9494" stroke-width="0.8" opacity="0.80"/><path d="M962.8 459.7 L963.6 458.2" stroke="#8f9494" stroke-width="0.8" opacity="0.80"/><path d="M964.8 490.5 L965.8 491.8" stroke="#8f9494" stroke-width="0.8" opacity="0.80"/><path d="M879.3 624.7 L886.5 623.0 L893.0 623.4 L895.4 627.1 L899.4 625.5 L905.0 630.3 L907.5 636.7 L909.5 643.2 L907.5 649.6 L903.4 654.4 L899.4 656.8 L897.0 661.7 L892.2 662.9 L886.5 662.9 L883.3 659.2 L877.7 658.4 L873.7 654.4 L869.3 650.4 L869.7 642.4 L871.3 636.7 L876.1 634.3 L876.9 629.5 Z" fill="none" stroke="#8f9494" stroke-width="1.1" stroke-linejoin="round"/><ellipse cx="883.3" cy="636.7" rx="2.4" ry="2.1" fill="none" stroke="#8f9494" stroke-width="0.9"/><path d="M890.2 631.1 Q891 628 893.5 627.5 M884 643 L885.5 645.5 M870.5 646 L873 646 M871 650 L873.5 649.5 M904 644 L906.5 645 M878 651 L879 653.5" fill="none" stroke="#8f9494" stroke-width="0.8"/><path d="M662.5 675.6 L661.9 676.8 L661.2 677.9 L660.8 679.0 L660.3 680.0 L659.6 680.9 L659.3 682.1 L658.6 683.1 L657.8 683.9 L656.9 684.7 L656.0 685.5 L654.9 686.2 L653.8 686.9 L652.6 687.6 L651.3 687.9 L650.0 688.3 L648.6 688.5 L647.2 688.5 L645.7 688.2 L644.4 687.7 L643.1 687.0 L642.1 686.1 L641.1 685.1 L640.6 683.7 L640.1 682.5 L639.5 681.4 L639.2 680.2 L638.8 679.1 L638.5 678.0 L638.4 676.8 L638.0 675.6 L637.8 674.4 L638.0 673.1 L638.1 671.9 L638.5 670.7 L639.3 669.7 L640.1 668.7 L640.9 667.7 L641.8 666.9 L642.8 666.1 L643.8 665.2 L645.0 664.8 L646.2 664.3 L647.4 664.0 L648.7 663.8 L650.0 663.8 L651.3 663.6 L652.6 664.0 L653.8 664.4 L655.1 664.7 L656.3 665.1 L657.5 665.7 L658.7 666.3 L660.0 667.0 L661.0 667.9 L661.9 669.0 L662.4 670.3 L662.7 671.6 L662.9 673.0 L662.7 674.3 Z" fill="none" stroke="#8f9494" stroke-width="1.00" opacity="1.00"/><path d="M999.2 679.0 L998.8 681.2 L997.9 683.2 L997.5 685.2 L996.7 687.2 L996.0 689.3 L994.8 691.0 L993.1 692.3 L991.9 694.0 L990.4 695.4 L988.7 696.7 L987.0 698.1 L985.0 698.9 L983.0 699.6 L980.9 700.3 L978.7 700.2 L976.5 700.2 L974.3 700.0 L972.3 699.3 L970.2 698.6 L968.4 697.2 L966.7 695.9 L965.2 694.3 L963.6 692.9 L962.2 691.3 L960.7 689.6 L959.7 687.7 L959.0 685.5 L958.1 683.5 L957.7 681.3 L957.6 679.0 L957.7 676.7 L958.2 674.5 L959.0 672.5 L960.0 670.5 L961.3 668.7 L962.2 666.7 L963.6 665.1 L965.0 663.4 L966.8 662.3 L968.6 661.1 L970.6 660.5 L972.8 660.3 L974.7 659.7 L976.6 658.9 L978.7 658.8 L980.8 658.5 L982.9 659.0 L984.9 659.4 L987.1 659.6 L989.4 660.1 L991.4 661.1 L993.2 662.5 L994.9 664.0 L996.5 665.8 L997.4 667.9 L997.9 670.2 L998.7 672.4 L999.0 674.6 L999.1 676.8 Z" fill="none" stroke="#a0a5a5" stroke-width="1.00" opacity="1.00"/><path d="M988.2 695.4 L989.4 697.6" stroke="#a0a5a5" stroke-width="0.8" opacity="0.80"/><path d="M961.5 681.3 L958.8 681.7" stroke="#a0a5a5" stroke-width="0.8" opacity="0.80"/><path d="M985.2 661.6 L986.0 659.5" stroke="#a0a5a5" stroke-width="0.8" opacity="0.80"/><path d="M980.2 696.2 L980.4 698.2" stroke="#a0a5a5" stroke-width="0.8" opacity="0.80"/><path d="M964.1 670.1 L961.8 668.7" stroke="#a0a5a5" stroke-width="0.8" opacity="0.80"/><path d="M980.6 696.7 L980.8 698.3" stroke="#a0a5a5" stroke-width="0.8" opacity="0.80"/><path d="M997.5 678.7 L1000.3 678.7" stroke="#a0a5a5" stroke-width="0.8" opacity="0.80"/><path d="M966.1 667.5 L964.6 666.2" stroke="#a0a5a5" stroke-width="0.8" opacity="0.80"/><path d="M961.6 679.3 L958.7 679.3" stroke="#a0a5a5" stroke-width="0.8" opacity="0.80"/><path d="M967.0 692.0 L965.2 694.0" stroke="#a0a5a5" stroke-width="0.8" opacity="0.80"/><path d="M992.3 693.0 L993.9 694.5" stroke="#a0a5a5" stroke-width="0.8" opacity="0.80"/><path d="M961.9 673.2 L959.8 672.5" stroke="#a0a5a5" stroke-width="0.8" opacity="0.80"/><path d="M985.2 695.0 L986.3 697.6" stroke="#a0a5a5" stroke-width="0.8" opacity="0.80"/><path d="M980.5 698.3 L980.7 700.1" stroke="#a0a5a5" stroke-width="0.8" opacity="0.80"/><path d="M997.5 675.2 L1000.1 674.7" stroke="#a0a5a5" stroke-width="0.8" opacity="0.80"/><path d="M980.2 660.3 L980.4 657.7" stroke="#a0a5a5" stroke-width="0.8" opacity="0.80"/><ellipse cx="682.2" cy="501.2" rx="4.8" ry="4.0" fill="none" stroke="#8f9494" stroke-width="0.90" opacity="1.00"/><ellipse cx="970.0" cy="589.0" rx="2.2" ry="1.9" fill="none" stroke="#8f9494" stroke-width="0.80" opacity="1.00"/><path d="M836 682 Q836.5 686 838.5 685.5 Q840 685 839.5 682" fill="none" stroke="#8f9494" stroke-width="0.8"/><circle cx="744.6" cy="210.7" r="0.9" fill="#8f9494"/><circle cx="680.5" cy="208.8" r="0.9" fill="#8f9494"/><circle cx="698.0" cy="261.0" r="0.9" fill="#8f9494"/><circle cx="715.5" cy="262.5" r="0.9" fill="#8f9494"/><circle cx="708.0" cy="275.0" r="0.9" fill="#8f9494"/><circle cx="725.6" cy="274.4" r="0.9" fill="#8f9494"/><circle cx="762.0" cy="538.5" r="0.9" fill="#8f9494"/><circle cx="751.5" cy="545.0" r="0.9" fill="#8f9494"/><circle cx="839.7" cy="557.0" r="0.9" fill="#8f9494"/><circle cx="768.7" cy="576.4" r="0.9" fill="#8f9494"/><circle cx="694.6" cy="601.0" r="0.9" fill="#8f9494"/><path d="M730.7 380.5 Q731.2 383.9 734.6 384.4 Q731.2 384.9 730.7 388.3 Q730.2 384.9 726.8 384.4 Q730.2 383.9 730.7 380.5 Z" fill="#8f9494"/></svg>
  <div class="a" id="gtitle">
    <div class="a" style="left:6px;top:7px;width:11px;height:9px;background:linear-gradient(90deg,#2a6fb8 0,#2fae5c 60%,#f0f0f0 60%);border:1px solid #b0b0b0"></div>
    <div class="a" style="left:22px;top:5.5px;font-size:8.8px;color:#606060">飞机大战</div>
    <svg class="a" style="left:260px;top:0" width="97" height="23"><path d="M7 11.5 H16" stroke="#707070" stroke-width="1"/><rect x="301" y="7" width="8" height="8" fill="none" stroke="#cfcfcf" stroke-width="1" transform="translate(-260 0)"/><path d="M334.5 6.5 L344.5 16.5 M344.5 6.5 L334.5 16.5" stroke="#707070" stroke-width="1" transform="translate(-260 0)"/></svg>
  </div>
</div>
<div class="a" style="left:0;top:0;width:601px;height:1px;background:#9a9a9a"></div>
<div class="a" style="left:0;top:1px;width:600px;height:1px;background:#111"></div>
<div class="a" style="left:0;top:0;width:2px;height:2px;background:#d8d8d8"></div>
</body></html>
